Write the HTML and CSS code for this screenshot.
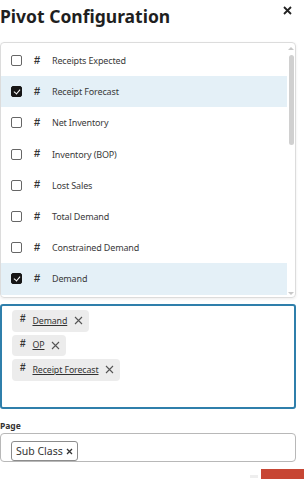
FILE: index.html
```html
<!DOCTYPE html>
<html lang="en">
<head>
  <meta charset="UTF-8">
  <title>Pivot Configuration</title>
  <link rel="stylesheet" href="styles.css">
</head>
<body>
  <div class="dialog">

    <div class="header">
      <h1>Pivot Configuration</h1>
      <svg class="close" width="9" height="9" viewBox="0 0 9 9"><path d="M1 1L8 8M8 1L1 8" stroke="#222" stroke-width="1.8"/></svg>
    </div>

    <div class="list-box">
      <div class="rows">
        <div class="row"><span class="box"></span><span class="hash">#</span><span>Receipts Expected</span></div>
        <div class="row on"><span class="box checked"></span><span class="hash">#</span><span>Receipt Forecast</span></div>
        <div class="row"><span class="box"></span><span class="hash">#</span><span>Net Inventory</span></div>
        <div class="row"><span class="box"></span><span class="hash">#</span><span>Inventory (BOP)</span></div>
        <div class="row"><span class="box"></span><span class="hash">#</span><span>Lost Sales</span></div>
        <div class="row"><span class="box"></span><span class="hash">#</span><span>Total Demand</span></div>
        <div class="row"><span class="box"></span><span class="hash">#</span><span>Constrained Demand</span></div>
        <div class="row on"><span class="box checked"></span><span class="hash">#</span><span>Demand</span></div>
      </div>
      <div class="scroll">
        <span class="arrow up"></span>
        <div class="track"><div class="thumb"></div></div>
        <span class="arrow down"></span>
      </div>
    </div>

    <div class="chosen">
      <div class="chip"><span class="hash">#</span><a>Demand</a><svg class="x" width="9" height="9" viewBox="0 0 9 9"><path d="M1 1L8 8M8 1L1 8" stroke="#555" stroke-width="1.1"/></svg></div>
      <div class="chip"><span class="hash">#</span><a>OP</a><svg class="x" width="9" height="9" viewBox="0 0 9 9"><path d="M1 1L8 8M8 1L1 8" stroke="#555" stroke-width="1.1"/></svg></div>
      <div class="chip"><span class="hash">#</span><a>Receipt Forecast</a><svg class="x" width="9" height="9" viewBox="0 0 9 9"><path d="M1 1L8 8M8 1L1 8" stroke="#555" stroke-width="1.1"/></svg></div>
    </div>

    <div class="label">Page</div>
    <div class="page-input">
      <span class="tag">Sub Class<svg class="tag-x" width="7" height="7" viewBox="0 0 7 7"><path d="M1 1L6 6M6 1L1 6" stroke="#333" stroke-width="1.3"/></svg></span>
    </div>

    <div class="footer">
      <span class="ghost"></span>
      <span class="primary"></span>
    </div>

  </div>
</body>
</html>
```

FILE: styles.css
```css
* {
  box-sizing: border-box;
}
body {
  margin: 0;
  font-family: 'Noto Sans', 'Open Sans', sans-serif;
  color: #2b2b2b;
  background: #fff;
  overflow: hidden;
}
.dialog {
  width: 304px;
  height: 479px;
}
.header {
  display: flex;
  justify-content: space-between;
  height: 42px;
}
h1 {
  margin: 0;
  padding-top: 4px;
  font-size: 17.5px;
  font-weight: 700;
  color: #1f1f1f;
}
.close {
  margin-right: 12px;
  margin-top: 6px;
}
.list-box {
  display: flex;
  width: 296px;
  height: 256px;
  border: 1px solid #dcdcdc;
  border-radius: 4px;
  box-shadow: 0 1px 3px rgba(0,0,0,0.08);
  overflow: hidden;
}
.rows {
  flex: 1;
  padding-top: 2px;
}
.row {
  display: flex;
  align-items: center;
  height: 31.2px;
  padding-left: 10px;
  font-size: 9px;
  letter-spacing: -0.15px;
  color: #3a3a3a;
}
.row.on {
  background: #e4f0f7;
}
.box {
  width: 11px;
  height: 11px;
  border: 1.5px solid #666;
  border-radius: 2px;
  margin-right: 12px;
  position: relative;
}
.box.checked {
  background: #161616;
  border-color: #161616;
}
.box.checked::after {
  content: "";
  position: absolute;
  left: 2.5px;
  top: 1px;
  width: 3px;
  height: 5px;
  border: solid #fff;
  border-width: 0 1.5px 1.5px 0;
  transform: rotate(40deg);
}
.hash {
  font-family: 'Liberation Sans', Arial, sans-serif;
  font-weight: 700;
  font-size: 11px;
  margin-right: 12px;
  margin-bottom: 2px;
  color: #333;
}
.scroll {
  width: 8px;
  display: flex;
  flex-direction: column;
  align-items: center;
  padding: 4px 0 2px;
}
.arrow {
  width: 0;
  height: 0;
  border-left: 3px solid transparent;
  border-right: 3px solid transparent;
}
.arrow.up {
  border-bottom: 3px solid #c8c8c8;
}
.arrow.down {
  border-top: 3px solid #c8c8c8;
}
.track {
  flex: 1;
  width: 5px;
  padding-top: 5px;
}
.thumb {
  height: 90px;
  background: #d0d0d0;
  border-radius: 3px;
}
.chosen {
  width: 296px;
  height: 105px;
  margin-top: 6px;
  border: 2px solid #2f7fab;
  border-radius: 3px;
  padding: 4px 10px;
  display: flex;
  flex-direction: column;
  align-items: flex-start;
  gap: 3px;
}
.chip {
  display: flex;
  align-items: center;
  height: 21.5px;
  padding: 0 6px 0 8px;
  background: #ececec;
  border-radius: 4px;
  font-size: 8.8px;
  letter-spacing: -0.1px;
  color: #333;
}
.chip .hash {
  font-size: 10px;
  margin-right: 7px;
  margin-bottom: 4px;
}
.chip a {
  text-decoration: underline;
  color: #333;
}
.chip .x {
  margin-left: 7px;
}
.label {
  margin-top: 11px;
  font-size: 8.5px;
  font-weight: 700;
  color: #333;
}
.page-input {
  width: 296px;
  height: 29px;
  margin-top: 2px;
  border: 1px solid #b8b8b8;
  border-radius: 4px;
  padding: 4px 10px;
}
.tag {
  display: inline-flex;
  align-items: center;
  height: 20px;
  padding: 0 4px;
  border: 1px solid #8c8c8c;
  border-radius: 3px;
  font-size: 10.5px;
  color: #333;
}
.tag-x {
  margin-left: 3px;
}
.footer {
  display: flex;
  justify-content: flex-end;
  align-items: flex-start;
  margin-top: 7px;
}
.ghost {
  width: 8px;
  height: 3px;
  margin-top: 6px;
  margin-right: 3px;
  background: #eee;
}
.primary {
  width: 43px;
  height: 14px;
  background: #c74634;
}
```
